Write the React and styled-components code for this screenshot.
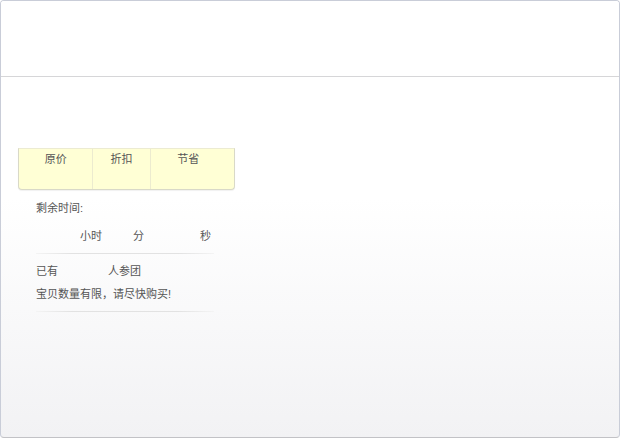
import styled, { createGlobalStyle } from 'styled-components';

const GlobalStyle = createGlobalStyle`
    html, body {
        margin: 0;
        padding: 0;
        background: #fff;
    }
    body {
        font-family: "Liberation Sans", "Noto Sans CJK SC", sans-serif;
        font-size: 11px;
        color: #555;
    }
`

export default function App() {
    const prices = [
        { label: "原价", width: 75 },
        { label: "折扣", width: 58 },
        { label: "节省", width: 84 },
    ];

    return (
        <Frame>
            <GlobalStyle />
            <Header />
            <Body>
                <PriceTable>
                    {prices.map((it, idx) => (
                        <PriceCell key={idx} $width={it.width} $last={idx === prices.length - 1}>
                            {it.label}
                        </PriceCell>
                    ))}
                </PriceTable>
                <Info>
                    <Label>剩余时间:</Label>
                    <TimeRow>
                        <TimeUnit $gap={44}>小时</TimeUnit>
                        <TimeUnit $gap={31}>分</TimeUnit>
                        <TimeUnit $gap={56}>秒</TimeUnit>
                    </TimeRow>
                    <Divider />
                    <JoinRow>
                        <span>已有</span>
                        <JoinCount>人参团</JoinCount>
                    </JoinRow>
                    <Notice>宝贝数量有限，请尽快购买!</Notice>
                    <Divider />
                </Info>
            </Body>
        </Frame>
    );
}

const Frame = styled.div`
    width: 620px;
    height: 438px;
    box-sizing: border-box;
    border: 1px solid #c9cdd8;
    border-bottom-color: #c2c2c6;
    border-radius: 4px;
    overflow: hidden;
    display: flex;
    flex-direction: column;
    background: linear-gradient(#ffffff 0%, #ffffff 45%, #f2f2f4 100%);
`

const Header = styled.div`
    height: 75px;
    flex-shrink: 0;
    border-bottom: 1px solid #d6d6d8;
    background: #fff;
`

const Body = styled.div`
    padding: 71px 0 0 17px;
`

const PriceTable = styled.div`
    display: flex;
    width: 217px;
    height: 42px;
    box-sizing: border-box;
    background: #ffffd5;
    border: 1px solid #d9d9c8;
    border-top-color: #ecebd2;
    border-radius: 0 0 4px 4px;
    box-shadow: 0 1px 1px rgba(0, 0, 0, 0.06);
`

const PriceCell = styled.div`
    width: ${p => p.$width}px;
    box-sizing: border-box;
    text-align: center;
    padding-top: 3px;
    padding-right: ${p => p.$last ? '8px' : '0'};
    line-height: 14px;
    color: #555;
    border-right: ${p => p.$last ? 'none' : '1px solid #ecebcf'};
`

const Info = styled.div`
    width: 178px;
    margin-left: 18px;
    padding-top: 11px;
`

const Label = styled.div`
    line-height: 14px;
`

const TimeRow = styled.div`
    display: flex;
    margin-top: 14px;
    line-height: 14px;
`

const TimeUnit = styled.span`
    margin-left: ${p => p.$gap}px;
`

const Divider = styled.div`
    height: 1px;
    margin-top: 10px;
    background: linear-gradient(90deg, #f4f4f4, #e2e2e2 20%, #e2e2e2 80%, #f4f4f4);
`

const JoinRow = styled.div`
    display: flex;
    margin-top: 10px;
    line-height: 14px;
`

const JoinCount = styled.span`
    margin-left: 50px;
`

const Notice = styled.div`
    margin-top: 9px;
    line-height: 14px;
`
